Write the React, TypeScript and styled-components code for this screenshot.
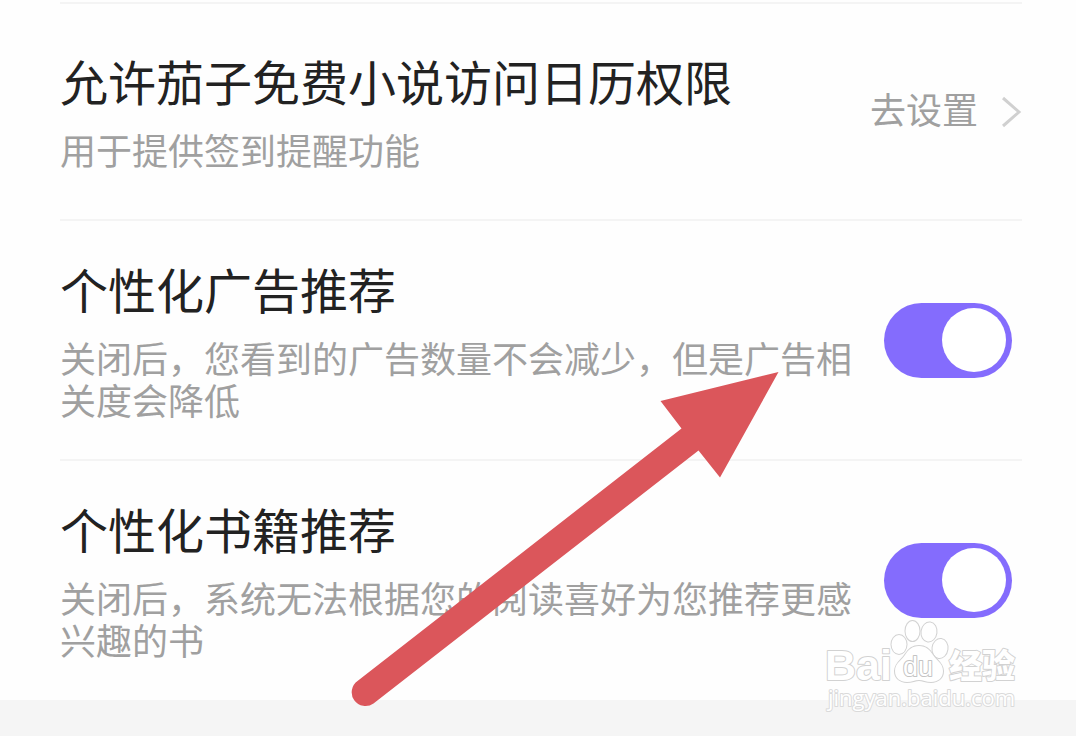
import React, { useId, useState } from "react";
import styled, { createGlobalStyle } from "styled-components";

const GlobalStyle = createGlobalStyle`
  *, *::before, *::after { box-sizing: border-box; }
  body {
    margin: 0;
    background: #f5f5f5;
    font-family: "Noto Sans CJK SC", "Noto Sans", sans-serif;
    color: #222;
  }
`;

const Page = styled.div`
  position: relative;
  overflow: hidden;
  padding-bottom: 36px;
`;

const Panel = styled.main`
  background: #fefefe;
  padding: 2px 54px 1px 60px;
`;

const List = styled.ul`
  list-style: none;
  margin: 0;
  padding: 0;
  border-top: 2px solid #f4f4f4;
`;

const Row = styled.li`
  display: flex;
  align-items: center;
  gap: 24px;

  &:not(:last-child) {
    border-bottom: 2px solid #f4f4f4;
  }
`;

const Copy = styled.div<{ $roomy?: boolean }>`
  flex: 1;
  min-width: 0;
  padding: ${(p) => (p.$roomy ? "48px 0 49px" : "39px 0 39px")};
`;

const Title = styled.label`
  display: block;
  font-size: 48px;
  line-height: 56px;
`;

const Description = styled.p`
  margin: 20px 0 0;
  font-size: 36px;
  line-height: 42px;
  color: #a0a0a0;
`;

const SettingsLink = styled.a`
  display: flex;
  align-items: center;
  gap: 24px;
  font-size: 36px;
  line-height: 42px;
  color: #a0a0a0;
  text-decoration: none;
  white-space: nowrap;
`;

const LinkText = styled.span`
  padding-bottom: 8px;
`;

const Chevron = styled.svg`
  width: 20px;
  height: 32px;
  fill: none;
  stroke: #d0d0d0;
  stroke-width: 3;
`;

const Switch = styled.input`
  appearance: none;
  flex: none;
  display: flex;
  align-items: center;
  width: 128px;
  height: 75px;
  margin: 0 10px 0 0;
  padding: 0 6px;
  border-radius: 38px;
  background: #d8d8d8;
  cursor: pointer;

  &::before {
    content: "";
    width: 64px;
    height: 64px;
    border-radius: 50%;
    background: #fff;
  }

  &:checked {
    justify-content: flex-end;
    background: #846cfd;
  }
`;

const Arrow = styled.svg`
  position: absolute;
  left: 350px;
  top: 370px;
  width: 430px;
  height: 338px;
  fill: #db565b;
  pointer-events: none;
`;

const Watermark = styled.svg`
  position: absolute;
  right: 54px;
  top: 616px;
  width: 200px;
  height: 100px;
  fill: #fff;
  stroke: #d2d2d2;
  stroke-width: 2;
  stroke-linejoin: round;
  paint-order: stroke;
  pointer-events: none;
`;

const Brand = styled.text`
  font: bold 43px "Liberation Sans", sans-serif;
`;

const PawText = styled.text`
  font: 27px "Liberation Sans", sans-serif;
  stroke: #c4c4c4;
`;

const Product = styled.text`
  font: 900 33px "Noto Sans CJK SC", sans-serif;
`;

const Address = styled.text`
  font: 500 22px "Open Sans", sans-serif;
  stroke: #dadada;
`;

function ToggleRow({ title, description }: { title: string; description: string }) {
  const id = useId();
  const [on, setOn] = useState(true);
  return (
    <Row>
      <Copy>
        <Title htmlFor={id}>{title}</Title>
        <Description>{description}</Description>
      </Copy>
      <Switch
        id={id}
        type="checkbox"
        role="switch"
        checked={on}
        onChange={(e) => setOn(e.target.checked)}
      />
    </Row>
  );
}

export default function App() {
  return (
    <>
      <GlobalStyle />
      <Page>
        <Panel>
          <List>
            <Row>
              <Copy $roomy>
                <Title as="div">允许茄子免费小说访问日历权限</Title>
                <Description>用于提供签到提醒功能</Description>
              </Copy>
              <SettingsLink href="#calendar">
                <LinkText>去设置</LinkText>
                <Chevron viewBox="0 0 20 32" aria-hidden="true">
                  <path d="M1 2 L17 16 L1 30" />
                </Chevron>
              </SettingsLink>
            </Row>
            <ToggleRow
              title="个性化广告推荐"
              description="关闭后，您看到的广告数量不会减少，但是广告相关度会降低"
            />
            <ToggleRow
              title="个性化书籍推荐"
              description="关闭后，系统无法根据您的阅读喜好为您推荐更感兴趣的书"
            />
          </List>
        </Panel>
        <Arrow viewBox="350 370 430 338" aria-hidden="true">
          <path d="M778.500 372 L660.500 401 L681.500 428.500 L357.500 681 A13.500 13.500 0 0 0 373.500 703.500 L698.500 450.500 L720 477.500 Z" />
        </Arrow>
        <Watermark viewBox="822 616 200 100" aria-hidden="true">
          <Brand x="825" y="680">Bai</Brand>
          <ellipse cx="899" cy="644.500" rx="7.500" ry="9.500" />
          <ellipse cx="912.500" cy="631" rx="7" ry="10" />
          <ellipse cx="929" cy="632" rx="7.500" ry="9.500" transform="rotate(8 929 632)" />
          <ellipse cx="940" cy="648.500" rx="7.500" ry="9.500" transform="rotate(8 940 648.500)" />
          <path d="M919 646 C926 646 930 650 933 655 C936 660 943 663 943 671 C943 678 938 682 931 682 C926 682 923 680 919 680 C915 680 912 682 907 682 C900 682 895 678 895 671 C895 663 902 660 905 655 C908 650 912 646 919 646 Z" />
          <PawText x="903" y="676">du</PawText>
          <Product x="949" y="678">经验</Product>
          <Address x="828" y="706">jingyan.baidu.com</Address>
        </Watermark>
      </Page>
    </>
  );
}
